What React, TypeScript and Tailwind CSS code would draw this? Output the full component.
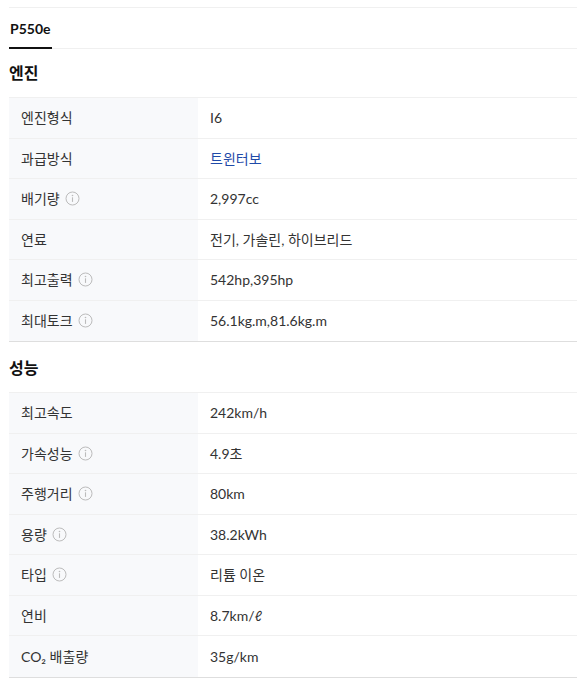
import React from "react";

const Info = () => (
  <svg width="15" height="15" viewBox="0 0 15 15" className="ml-[5px] inline-block" fill="none">
    <circle cx="7.5" cy="7.5" r="6.5" stroke="#bcbcbc" strokeWidth="1" />
    <circle cx="7.5" cy="4.5" r="0.8" fill="#bcbcbc" />
    <path d="M7.5 6.3v4.6" stroke="#bcbcbc" strokeWidth="1.1" />
  </svg>
);

type Row = { label: React.ReactNode; info?: boolean; value: React.ReactNode; blue?: boolean };

const engine: Row[] = [
  { label: "엔진형식", value: "I6" },
  { label: "과급방식", value: "트윈터보", blue: true },
  { label: "배기량", info: true, value: "2,997cc" },
  { label: "연료", value: "전기, 가솔린, 하이브리드" },
  { label: "최고출력", info: true, value: "542hp,395hp" },
  { label: "최대토크", info: true, value: "56.1kg.m,81.6kg.m" },
];

const perf: Row[] = [
  { label: "최고속도", value: "242km/h" },
  { label: "가속성능", info: true, value: "4.9초" },
  { label: "주행거리", info: true, value: "80km" },
  { label: "용량", info: true, value: "38.2kWh" },
  { label: "타입", info: true, value: "리튬 이온" },
  { label: "연비", value: "8.7km/ℓ" },
  { label: (<>CO₂ 배출량</>), value: "35g/km" },
];

const Table = ({ rows }: { rows: Row[] }) => (
  <div className="border-t border-[#f0f0f0] border-b border-b-[#dedede]">
    {rows.map((r, i) => (
      <div
        key={i}
        className={`flex h-[40.5px] ${i < rows.length - 1 ? "border-b border-[#f0f0f0]" : ""}`}
      >
        <div className="w-[189px] bg-[#f8f9fb] flex items-center pl-[12px] text-[14px] text-[#333]">
          {r.label}
          {r.info && <Info />}
        </div>
        <div
          className={`flex-1 flex items-center pl-[12px] text-[14px] ${r.blue ? "text-[#1f4aa8]" : "text-[#333]"}`}
        >
          {r.value}
        </div>
      </div>
    ))}
  </div>
);

export default function App() {
  return (
    <div
      className="w-[588px] h-[686px] bg-white overflow-hidden"
      style={{ fontFamily: 'Lato, "Noto Sans CJK KR", "Noto Sans", sans-serif' }}
    >
      <div className="ml-[9px] w-[568px] pt-[7px]">
        <div className="border-t border-[#f0f0f0]" />
        <div className="h-[41px] border-b border-[#f0f0f0] flex">
          <div className="relative flex items-center px-[1px] text-[14px] font-bold text-[#111]">
            P550e
            <div className="absolute left-0 right-0 -bottom-[1px] h-[2px] bg-[#111]" />
          </div>
        </div>
        <div className="h-[48px] flex items-center text-[16px] font-bold text-[#111]">엔진</div>
        <Table rows={engine} />
        <div className="h-[50px] flex items-center pt-[1px] text-[16px] font-bold text-[#111]">성능</div>
        <Table rows={perf} />
      </div>
    </div>
  );
}
